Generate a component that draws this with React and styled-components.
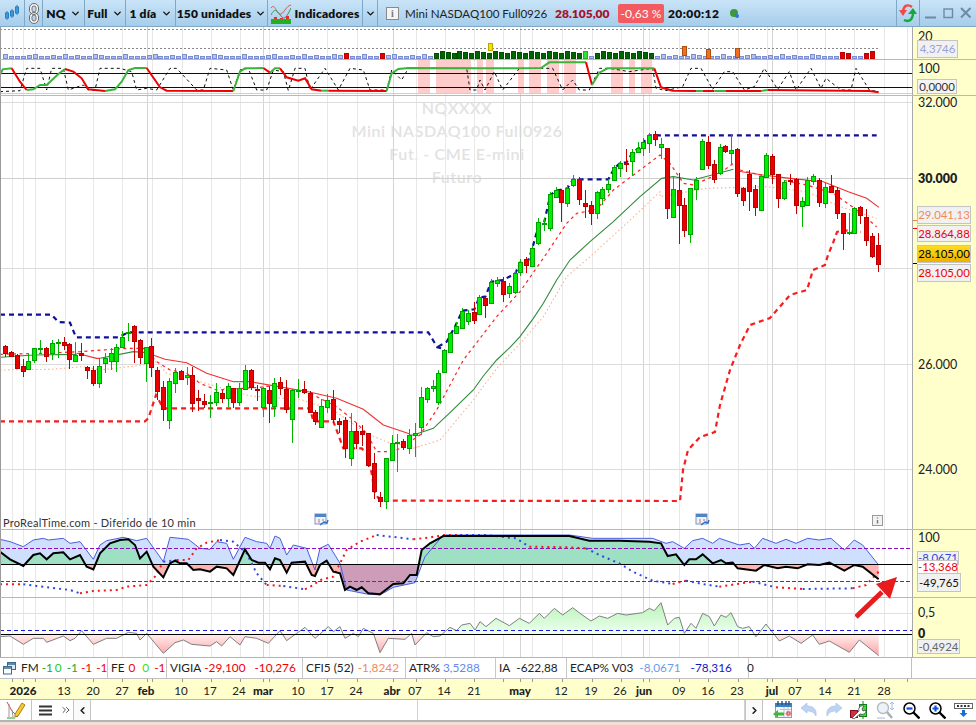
import React from 'react';
import styled, { createGlobalStyle } from 'styled-components';
import { ChevronDown, ChevronLeft, ChevronRight, ChevronsRight } from 'lucide-react';

const GlobalStyle = createGlobalStyle`
  html, body { margin: 0; padding: 0; background: #f4dfd8; }
  body { font-family: "Lato", "Liberation Sans", sans-serif; overflow: hidden; }
`;

const PLOT_W = 912;

// points were read off zoomed crops: z(ox, oy) turns crop coords into page coords
const z = (ox, oy) => (list) => list.map(([x, y]) => [ox + x / 3, oy + y / 3]);
const pts = (list) => list.map((p) => p.join(',')).join(' ');
const area = (list, base) => pts([[list[0][0], base], ...list, [list[list.length - 1][0], base]]);

const Page = styled.div`
  position: relative;
  width: 976px;
  height: 725px;
  display: flex;
  flex-direction: column;
  overflow: hidden;
  background: #f4dfd8;
`;

const Toolbar = styled.div`
  height: 27px;
  flex: none;
  display: flex;
  align-items: center;
  background: linear-gradient(#c9e4f8, #a6cdea);
  border-bottom: 1px solid #7fa8c6;
  box-sizing: border-box;
  font-size: 12px;
  color: #111;
`;
const ToolCell = styled.div`
  width: ${(p) => p.$w}px;
  height: 100%;
  flex: none;
  box-sizing: border-box;
  display: flex;
  align-items: center;
  justify-content: center;
  gap: ${(p) => p.$gap ?? 4}px;
  border-right: ${(p) => (p.$plain ? 'none' : '1px solid #7fa8c6')};
  font-weight: 800;
  letter-spacing: 0.2px;
`;
const Instrument = styled.div`
  flex: 1;
  display: flex;
  align-items: center;
  height: 100%;
  padding-left: 8px;
  border-right: 1px solid #7fa8c6;
`;
const InfoBox = styled.span`
  width: 11px;
  height: 11px;
  border: 1px solid #8a8a8a;
  background: #f4f4f4;
  color: #777;
  font: bold 10px/11px "Liberation Serif", serif;
  text-align: center;
  margin-right: 6px;
`;
const InstrumentName = styled.span`
  font-size: 11.6px;
  width: 150px;
  white-space: nowrap;
  color: #222;
`;
const Last = styled.span`
  font-weight: 800;
  font-size: 12px;
  color: #a8102a;
  width: 63px;
`;
const Change = styled.span`
  background: #f25b5f;
  color: #fff;
  font-size: 12px;
  line-height: 15px;
  border-radius: 2px;
  padding: 2px 0;
  width: 46px;
  white-space: nowrap;
  text-align: center;
  margin-right: 4px;
`;
const Clock = styled.span`
  font-weight: 800;
  font-size: 12px;
  letter-spacing: 0.4px;
  width: 62px;
`;
const StatusDot = styled.span`
  position: relative;
  width: 8px;
  height: 8px;
  border-radius: 50%;
  background: #3c9a3c;
  &::after {
    content: '';
    position: absolute;
    right: -1px;
    bottom: -1px;
    width: 4px;
    height: 4px;
    border-radius: 50%;
    background: #2878e0;
  }
`;

const Pane = styled.div`
  position: relative;
  height: ${(p) => p.$h}px;
  flex: none;
  display: flex;
  box-sizing: border-box;
  background: #fff;
  &::after {
    content: '';
    display: ${(p) => (p.$noTop ? 'none' : 'block')};
    position: absolute;
    left: 0;
    right: 0;
    top: 0;
    height: 1px;
    background: #b8b8b8;
    z-index: 1;
  }
`;
const Plot = styled.div`
  position: relative;
  width: ${PLOT_W}px;
  flex: none;
  overflow: hidden;
  border-left: 1px solid #9a9a9a;
  box-sizing: border-box;
  svg { display: block; position: relative; margin-left: -1px; }
`;
const Axis = styled.div`
  position: relative;
  flex: 1;
  background: #ffffcc;
  border-left: 1px solid #a8a8a8;
  font-size: 12.5px;
  color: #222;
`;
const AxisValue = styled.span`
  position: absolute;
  left: 5px;
  top: ${(p) => p.$y}px;
  line-height: 14px;
  font-weight: ${(p) => (p.$bold ? 800 : 400)};
  color: #222;
  white-space: nowrap;
`;
const Tag = styled.span`
  position: absolute;
  z-index: 3;
  left: 4px;
  top: ${(p) => p.$y}px;
  width: ${(p) => p.$w ?? 54}px;
  height: ${(p) => p.$h ?? 18}px;
  line-height: ${(p) => (p.$h ?? 18) - 2}px;
  box-sizing: border-box;
  text-align: center;
  font-size: 11.4px;
  white-space: nowrap;
  color: ${(p) => p.$c};
  background: ${(p) => p.$bg ?? '#f1f1f1'};
  border: 1px solid #c4c4c4;
`;
const Tick = styled.i`
  position: absolute;
  left: 0;
  top: ${(p) => p.$y}px;
  width: 4px;
  height: 1px;
  background: ${(p) => p.$c};
`;

const Watermark = styled.div`
  position: absolute;
  left: 0;
  width: ${PLOT_W}px;
  top: 1px;
  text-align: center;
  color: #e2e2e2;
  font-size: 16px;
  font-weight: 600;
  line-height: 23px;
  letter-spacing: 0.6px;
`;
const Delay = styled.div`
  position: absolute;
  left: 2px;
  bottom: -1px;
  font-size: 11px;
  line-height: 15px;
  color: #333;
  letter-spacing: 0.25px;
`;

const Legend = styled.div`
  height: 21px;
  flex: none;
  display: flex;
  background: #fff;
  border-top: 1px solid #b4b4b4;
  box-sizing: border-box;
`;
const LegendRow = styled.div`
  width: ${PLOT_W}px;
  display: flex;
  flex: none;
  border-right: 1px solid #c0c0c0;
  box-sizing: border-box;
  font-size: 11.8px;
  line-height: 20px;
  color: #222;
`;
const LegendCell = styled.div`
  width: ${(p) => p.$w}px;
  flex: none;
  display: flex;
  box-sizing: border-box;
  padding-left: ${(p) => p.$pad ?? 3}px;
  border-right: ${(p) => (p.$plain ? 'none' : '1px solid #c8c8c8')};
  white-space: nowrap;
  align-items: ${(p) => (p.$plain ? 'center' : 'stretch')};
`;
const LegendValue = styled.span`
  color: ${(p) => p.$c ?? '#222'};
  margin-left: ${(p) => p.$ml}px;
`;

const TimeAxis = styled.div`
  position: relative;
  height: 22px;
  flex: none;
  background: #ffffcc;
  border-top: 1px solid #c0c0c0;
  border-bottom: 1px solid #b8b8b8;
  box-sizing: border-box;
`;
const TimeLabel = styled.span`
  position: absolute;
  left: ${(p) => p.$x}px;
  top: 5px;
  transform: translateX(-50%);
  font-size: 11.6px;
  line-height: 14px;
  font-weight: ${(p) => (p.$bold ? 900 : 400)};
  color: #222;
`;
const TimeTick = styled.i`
  position: absolute;
  left: ${(p) => p.$x}px;
  top: 0;
  width: 1px;
  height: 3px;
  background: #999;
`;

const BottomBar = styled.div`
  height: 20px;
  flex: none;
  display: flex;
  align-items: stretch;
  background: #fff;
  border-bottom: 2px solid #b4b4b4;
  box-sizing: content-box;
`;
const BarButton = styled.div`
  width: ${(p) => p.$w}px;
  flex: none;
  display: flex;
  align-items: center;
  justify-content: center;
  box-sizing: border-box;
  border-right: ${(p) => (p.$line ? '1px solid #c4c4c4' : 'none')};
`;
const ScrollTrack = styled.div`
  width: 690px;
  flex: none;
  display: flex;
  border-left: 1px solid #c4c4c4;
  border-right: 1px solid #c4c4c4;
  box-sizing: border-box;
`;
const ScrollEnd = styled.div`
  width: 16px;
  flex: none;
  display: flex;
  align-items: center;
  justify-content: center;
  background: #fafafa;
  border-left: ${(p) => (p.$right ? '1px solid #c4c4c4' : 'none')};
  border-right: ${(p) => (p.$right ? 'none' : '1px solid #c4c4c4')};
`;
const ScrollFill = styled.div`
  flex: 1;
  border-right: 1px solid #d0d0d0;
`;
const IconRow = styled.div`
  flex: 1;
  display: flex;
  align-items: center;
  justify-content: space-between;
  padding: 0 3px 0 10px;
`;

// grid lines shared by every pane
const WEEK_X = [12, 23, 35, 65, 93, 122, 152, 182, 211, 240, 269, 298, 327, 357, 416, 445, 474, 503, 532, 562, 592, 621, 649, 679, 708, 738, 767, 797, 825, 854, 884, 907];
const MONTH_X = [147, 263, 393, 520, 643, 772];

function Grid({ y, h }) {
  return (
    <g shapeRendering="crispEdges">
      {WEEK_X.map((x) => (
        <line key={x} x1={x} x2={x} y1={y} y2={y + h} stroke="#e8e8e8" />
      ))}
      {MONTH_X.map((x) => (
        <line key={x} x1={x} x2={x} y1={y} y2={y + h} stroke="#d4d4d4" />
      ))}
    </g>
  );
}

function PaneSvg({ y, h, children }) {
  return (
    <svg width={PLOT_W} height={h} viewBox={`0 ${y} ${PLOT_W} ${h}`}>
      <Grid y={y} h={h} />
      {children}
    </svg>
  );
}

// volume pane
const RED_VOL = [163, 345, 367, 373, 380, 843, 849, 866, 872, 878];
const ORANGE_VOL = { 684: 46, 708: 49, 737: 48 };
const volBars = Array.from({ length: 146 }, (_, i) => {
  const x = Math.round(5 + 5.98 * i);
  const near = (list) => list.some((v) => Math.abs(v - x) <= 2);
  let kind = 'blue';
  if (near(RED_VOL)) kind = 'red';
  else if (x >= 436 && x <= 656 && !near([591])) kind = near([585]) ? 'lime' : 'green';
  return { x, kind, blue: 2 + ((i * 7) % 5 === 0 ? 2 : (i * 3) % 4 === 0 ? 1 : 0), tall: 5 + ((i * 5) % 3) };
});
const VOL_COLOR = {
  red: ['#e00000', '#c00000'],
  green: ['#006400', '#005000'],
  lime: ['#30e030', '#20b020'],
};

function VolumePane() {
  return (
    <PaneSvg y={27} h={32}>
      <g stroke="#888" strokeDasharray="2 2" shapeRendering="crispEdges">
        <line x1="0" x2="878" y1="29" y2="29" />
        <line x1="0" x2="878" y1="48" y2="48" />
      </g>
      <g shapeRendering="crispEdges">
        {volBars.map((b) => {
          if (b.kind === 'blue') {
            return <rect key={b.x} x={b.x - 2 + 0.5} y={58 - b.blue + 0.5} width="4" height={b.blue} fill="#b4c2ee" stroke="#7c8ecf" />;
          }
          const [fill, stroke] = VOL_COLOR[b.kind];
          return <rect key={b.x} x={b.x - 2 + 0.5} y={58 - b.tall + 0.5} width="4" height={b.tall} fill={fill} stroke={stroke} />;
        })}
        <rect x="488.5" y="43.5" width="4" height="7" fill="#f2e200" stroke="#b8a800" />
        {Object.entries(ORANGE_VOL).map(([x, top]) => (
          <rect key={x} x={+x - 2 + 0.5} y={top + 0.5} width="4" height={9} fill="#f07020" stroke="#b05010" />
        ))}
      </g>
    </PaneSvg>
  );
}

// oscillator pane
const PINK_BANDS = [[418, 430], [436, 471], [477, 483], [486, 494], [518, 524], [529, 541], [547, 559], [564, 576], [611, 623], [629, 635], [641, 652]];
const ose1 = z(0, 0);
const ose2 = z(486, 0);
const OSC_SEGMENTS = [
  ['g', ose1([[0, 225], [8, 208], [35, 205]])],
  ['r', ose1([[35, 205], [60, 245], [80, 270]])],
  ['g', ose1([[80, 270], [100, 268], [120, 255], [140, 255], [175, 222], [195, 207]])],
  ['r', ose1([[195, 207], [220, 215], [245, 235], [265, 268], [315, 273]])],
  ['g', ose1([[315, 273], [345, 268], [365, 245], [385, 210], [405, 204], [440, 204]])],
  ['r', ose1([[440, 204], [480, 262], [500, 272], [700, 273]])],
  ['g', ose1([[700, 273], [720, 215], [735, 205], [790, 204]])],
  ['r', ose1([[790, 204], [810, 218]])],
  ['g', ose1([[810, 218], [825, 205], [840, 205]])],
  ['r', ose1([[840, 205], [860, 232], [895, 242], [915, 235], [935, 268], [965, 272]])],
  ['g', ose1([[965, 272], [985, 272]])],
  ['r', ose1([[985, 272], [1160, 273]])],
  ['g', [...ose1([[1160, 273], [1175, 220], [1195, 207], [1225, 204]]), ...ose2([[0, 205], [165, 204], [190, 187], [300, 187]])]],
  ['r', ose2([[300, 187], [318, 255]])],
  ['g', ose2([[318, 255], [340, 218], [365, 205], [505, 205]])],
  ['r', ose2([[505, 205], [525, 262], [560, 272], [630, 273]])],
  ['g', ose2([[630, 273], [650, 273]])],
  ['r', ose2([[650, 273], [685, 273]])],
  ['g', ose2([[685, 273], [720, 273]])],
  ['r', ose2([[720, 273], [825, 273]])],
  ['g', ose2([[825, 273], [845, 270]])],
  ['r', ose2([[845, 270], [1150, 273], [1178, 277]])],
];
const OSC_BLACK = [
  ...ose1([[0, 275], [60, 272], [80, 205], [120, 205], [140, 270], [155, 205], [190, 205], [205, 270], [250, 255], [265, 270], [285, 270], [300, 205], [360, 205], [395, 215], [410, 270], [440, 265], [470, 270], [510, 205], [530, 205], [590, 270], [610, 270], [630, 205], [680, 210], [700, 270], [720, 210], [745, 205], [770, 270], [800, 270], [820, 210], [850, 215], [865, 272], [885, 205], [915, 205], [930, 270], [975, 205], [1015, 270], [1050, 205], [1090, 210], [1110, 270], [1160, 270], [1175, 210], [1205, 240], [1225, 205], [1400, 205], [1410, 270], [1430, 270], [1440, 240], [1455, 270]]),
  ...ose2([[25, 215], [50, 270], [100, 205], [120, 205], [200, 205], [230, 270], [260, 240], [280, 270], [310, 270], [340, 205], [370, 205], [430, 215], [500, 205], [510, 265], [540, 272], [590, 260], [615, 205], [645, 205], [680, 268], [715, 215], [740, 215], [775, 270], [805, 260], [835, 205], [875, 268], [910, 215], [930, 270], [975, 205], [1005, 265], [1020, 235], [1065, 270], [1095, 270], [1110, 205], [1150, 270], [1178, 275]]),
];

function OscillatorPane() {
  return (
    <PaneSvg y={59} h={36}>
      {PINK_BANDS.map(([a, b]) => (
        <rect key={a} x={a} y="60" width={b - a} height="33" fill="#ffcccc" />
      ))}
      <line x1="0" x2={PLOT_W} y1="93.5" y2="93.5" stroke="#cfcfcf" />
      <line x1="0" x2={PLOT_W} y1="73.5" y2="73.5" stroke="#00007a" />
      <line x1="0" x2={PLOT_W} y1="87.5" y2="87.5" stroke="#00007a" />
      <polyline points={pts(OSC_BLACK)} fill="none" stroke="#111" strokeWidth="1" strokeDasharray="3 3" />
      {OSC_SEGMENTS.map(([c, list], i) => (
        <polyline key={i} points={pts(list)} fill="none" stroke={c === 'g' ? '#3cb43c' : '#f00000'} strokeWidth="2" />
      ))}
    </PaneSvg>
  );
}

// candles: [green?, x, wick top, wick bottom, body top, body bottom] in crop coords
const CANDLES_A = [
  [0, 16, 105, 142, 108, 128], [0, 34, 122, 142, 127, 139], [0, 52, 132, 176, 136, 174], [0, 70, 148, 200, 168, 182], [1, 85, 133, 178, 154, 176], [1, 103, 115, 160, 115, 150], [1, 121, 90, 130, 115, 117], [0, 139, 112, 155, 114, 138], [1, 157, 90, 150, 100, 130], [1, 175, 88, 145, 95, 97], [0, 193, 82, 120, 97, 104], [0, 208, 100, 178, 103, 146], [1, 226, 96, 155, 136, 152], [0, 244, 100, 152, 128, 136], [0, 262, 168, 207, 170, 181], [0, 280, 168, 228, 181, 220], [1, 298, 145, 235, 169, 218], [1, 316, 128, 188, 143, 160], [1, 332, 115, 180, 130, 152], [1, 349, 102, 185, 112, 152], [1, 367, 62, 110, 80, 110], [1, 385, 40, 92, 66, 68], [0, 403, 46, 160, 48, 92], [0, 421, 88, 162, 91, 140], [1, 439, 110, 215, 112, 160], [0, 454, 85, 200, 108, 172], [0, 472, 170, 270, 180, 242], [0, 490, 212, 332, 232, 296], [1, 508, 205, 358, 214, 331], [1, 526, 175, 248, 187, 218], [0, 544, 180, 210, 184, 208], [1, 562, 170, 225, 196, 202], [0, 577, 170, 305, 195, 278], [0, 595, 240, 303, 265, 271], [0, 613, 253, 295, 274, 281], [1, 631, 255, 325, 277, 280], [1, 649, 220, 288, 247, 275], [0, 667, 240, 280, 250, 263], [1, 685, 220, 290, 229, 265], [0, 700, 233, 293, 234, 277], [1, 718, 220, 288, 235, 275], [1, 736, 165, 240, 180, 238], [0, 754, 178, 240, 180, 230], [0, 772, 225, 272, 237, 241], [1, 790, 232, 322, 235, 290], [0, 808, 228, 340, 240, 278], [1, 823, 205, 320, 220, 287], [0, 841, 202, 255, 216, 233], [0, 859, 210, 308, 238, 298], [1, 877, 238, 398, 240, 328], [1, 895, 208, 265, 239, 241], [0, 913, 212, 252, 238, 245], [0, 931, 242, 310, 249, 307], [0, 946, 300, 345, 307, 333], [1, 964, 268, 353, 289, 352], [1, 982, 252, 310, 271, 292], [0, 1000, 240, 338, 268, 328], [0, 1018, 325, 368, 332, 341], [0, 1036, 320, 443, 331, 415], [1, 1054, 310, 467, 364, 445], [0, 1069, 340, 418, 364, 398], [0, 1087, 345, 408, 364, 371], [0, 1105, 368, 470, 370, 465], [0, 1123, 430, 568, 460, 542], [0, 1141, 545, 592, 562, 572], [1, 1159, 443, 598, 445, 574], [1, 1177, 376, 452, 400, 450], [1, 1192, 372, 485, 395, 400],
];
const CANDLES_B = [
  [0, 10, 958, 990, 963, 982], [1, 28, 928, 1003, 945, 985], [1, 46, 910, 1010, 940, 945], [1, 64, 800, 945, 832, 920], [1, 82, 800, 850, 805, 838], [1, 100, 780, 815, 798, 805], [1, 115, 750, 855, 760, 845], [1, 133, 688, 758, 691, 755], [1, 151, 635, 698, 638, 695], [1, 169, 605, 642, 618, 640], [1, 187, 563, 628, 572, 623], [1, 205, 570, 615, 580, 602], [0, 223, 545, 612, 576, 600], [1, 238, 525, 585, 532, 583], [0, 256, 530, 593, 535, 554], [1, 274, 478, 548, 485, 548], [1, 292, 470, 502, 481, 488], [0, 310, 472, 546, 484, 521], [1, 328, 490, 533, 498, 518], [1, 346, 452, 522, 460, 515], [1, 361, 418, 468, 427, 455], [0, 379, 410, 460, 418, 436], [1, 397, 375, 442, 385, 437], [1, 415, 295, 375, 307, 370], [1, 433, 295, 332, 309, 313], [1, 451, 215, 332, 222, 325], [1, 469, 202, 235, 211, 230], [0, 484, 208, 305, 210, 245], [1, 502, 195, 262, 205, 250], [1, 520, 165, 200, 178, 196], [0, 538, 172, 256, 178, 238], [0, 556, 210, 294, 250, 257], [0, 574, 242, 314, 255, 278], [1, 592, 212, 296, 216, 278], [1, 607, 200, 255, 208, 235], [1, 625, 178, 220, 192, 208], [1, 643, 135, 182, 141, 180], [1, 661, 122, 170, 128, 143], [0, 679, 87, 155, 128, 131], [1, 697, 88, 168, 97, 122], [1, 715, 65, 100, 85, 95], [1, 730, 55, 108, 65, 83], [1, 748, 40, 98, 46, 68], [0, 766, 34, 78, 42, 56], [1, 784, 55, 118, 73, 80], [0, 802, 84, 298, 84, 265], [1, 820, 170, 292, 208, 290], [0, 838, 158, 373, 210, 254], [0, 853, 235, 350, 255, 329], [1, 871, 205, 368, 205, 341], [1, 889, 170, 240, 180, 208],
];
const CANDLES_C = [
  [1, 187, 58, 150, 63, 148], [0, 205, 48, 148, 66, 134], [0, 223, 120, 190, 132, 176], [1, 241, 72, 165, 82, 160], [0, 256, 75, 100, 78, 92], [1, 274, 45, 135, 90, 100], [0, 292, 85, 232, 87, 218], [0, 310, 200, 258, 204, 240], [0, 328, 150, 272, 162, 212], [0, 346, 195, 287, 208, 260], [1, 364, 165, 272, 168, 270], [1, 379, 98, 172, 105, 172], [0, 397, 102, 192, 108, 163], [0, 415, 162, 265, 162, 234], [1, 433, 180, 240, 186, 233], [0, 451, 162, 195, 181, 184], [0, 469, 175, 282, 177, 254], [1, 487, 232, 320, 244, 257], [1, 502, 170, 255, 181, 254], [1, 520, 163, 195, 169, 182], [0, 538, 175, 262, 181, 246], [1, 556, 190, 265, 202, 248], [0, 574, 165, 218, 198, 215], [0, 592, 200, 296, 210, 278], [0, 610, 278, 390, 280, 338], [1, 628, 280, 345, 336, 340], [1, 643, 262, 342, 264, 338], [0, 661, 258, 312, 262, 285], [0, 679, 268, 378, 292, 360], [0, 697, 340, 415, 349, 407], [0, 715, 340, 455, 376, 431],
];
const toCandles = (list, ox, oy) =>
  list.map(([up, x, wt, wb, bt, bb]) => ({
    up,
    x: Math.round(ox + x / 3),
    wt: Math.round(oy + wt / 3),
    wb: Math.round(oy + wb / 3),
    bt: Math.round(oy + bt / 3),
    bb: Math.round(oy + bb / 3),
  }));
const CANDLES = [...toCandles(CANDLES_A, 0, 310), ...toCandles(CANDLES_B, 400, 120), ...toCandles(CANDLES_C, 640, 120)];

const a8 = z(0, 310);
const a9 = z(400, 120);
const a5 = z(640, 120);
const BLUE_STOP = [
  ...a8([[0, 14], [155, 14], [175, 36], [210, 38], [228, 82], [355, 82], [385, 67], [1285, 67], [1312, 112], [1325, 115]]),
  ...a9([[115, 680], [140, 665], [165, 620], [187, 572], [223, 568], [238, 532], [256, 530], [274, 485], [310, 480], [346, 460], [361, 427], [385, 420], [397, 385], [415, 320], [433, 305], [451, 225], [469, 212], [502, 205], [520, 178], [625, 178], [643, 145], [661, 128], [679, 128], [697, 100], [715, 85], [730, 68], [748, 46]]),
  ...a5([[710, 46]]),
];
const RED_STOP_A = [
  ...a8([[0, 334], [435, 334], [445, 325], [468, 255], [490, 295], [930, 295], [940, 334], [1000, 334], [1030, 415], [1085, 415], [1100, 430], [1115, 490], [1125, 550], [1141, 572], [1160, 572]]),
  [680, 501], [683, 470], [688, 450], [700, 437], [715, 432], [720, 405], [730, 370], [740, 345], [750, 325], [770, 318], [790, 295], [807, 290], [813, 270], [825, 265], [828, 255], [833, 243], [837, 232], [842, 230], [861, 232],
];
const MA_SEGMENTS = [
  ['g', a8([[0, 142], [100, 135], [230, 133]])],
  ['r', a8([[230, 130], [290, 145], [300, 145]])],
  ['g', a8([[300, 145], [400, 125], [440, 128]])],
  ['r', a8([[440, 128], [495, 148], [560, 158], [620, 190], [700, 215]])],
  ['g', a8([[700, 215], [750, 215]])],
  ['r', a8([[750, 215], [925, 245], [1010, 265], [1090, 298], [1150, 345], [1230, 372]])],
  ['g', [...a8([[1230, 375]]), ...a9([[40, 945], [100, 925], [150, 878], [220, 810], [250, 768], [290, 720], [330, 682], [360, 650], [400, 595], [430, 550], [470, 480], [510, 420], [570, 365], [640, 305], [720, 230], [785, 175]]), ...a5([[100, 170], [160, 180], [280, 148]])]],
  ['r', a5([[290, 153], [370, 165], [450, 175], [550, 185], [625, 215], [680, 235], [717, 262]])],
];
const MA_FAST = [
  ...a8([[0, 133], [130, 130], [240, 125], [380, 115], [430, 115], [470, 155], [510, 180], [560, 190], [600, 220], [650, 240], [780, 232], [830, 225], [880, 240], [930, 250], [1010, 290], [1060, 330], [1100, 370], [1130, 425], [1180, 425]]),
  ...a9([[0, 985], [60, 945], [110, 870], [190, 720], [290, 590], [360, 515], [440, 400], [500, 310], [530, 280], [590, 268], [640, 210], [720, 150], [780, 105], [810, 130], [850, 190]]),
  ...a5([[160, 195], [240, 160], [280, 130], [300, 150], [400, 175], [500, 195], [580, 220], [650, 270], [710, 320]]),
];
const MA_SLOW = [
  ...a8([[0, 180], [150, 178], [250, 170], [300, 180], [430, 165], [470, 155], [500, 190], [600, 215], [750, 258], [900, 268], [1000, 300], [1100, 370], [1170, 400], [1260, 410]]),
  ...a9([[40, 985], [120, 960], [220, 840], [290, 745], [370, 660], [430, 590], [500, 470], [570, 410], [680, 310], [780, 215]]),
  ...a5([[60, 230], [200, 205], [380, 200], [500, 215], [600, 260], [710, 295]]),
];

function MiniCalendar({ x, y }) {
  return (
    <g transform={`translate(${x} ${y})`}>
      <rect x="1" y="1" width="11" height="10" fill="#eef2fa" stroke="#7d96c0" />
      <rect x="1" y="1" width="11" height="3" fill="#4f84c4" />
      <path d="M4 7h2M8 7h2M4 9h2" stroke="#c87070" />
      <path d="M6 12l4-3 3 1 1-3" fill="none" stroke="#2a70c8" strokeWidth="1.4" />
    </g>
  );
}

function MainPane() {
  return (
    <PaneSvg y={95} h={434}>
      <g stroke="#dcdcdc" shapeRendering="crispEdges">
        <line x1="0" x2={PLOT_W} y1="102.5" y2="102.5" />
        <line x1="0" x2={PLOT_W} y1="178.5" y2="178.5" stroke="#cfcfcf" />
        <line x1="0" x2={PLOT_W} y1="268.5" y2="268.5" />
        <line x1="0" x2={PLOT_W} y1="364.5" y2="364.5" />
        <line x1="0" x2={PLOT_W} y1="469.5" y2="469.5" />
      </g>
      <polyline points={pts(MA_SLOW)} fill="none" stroke="#ffae90" strokeWidth="1.1" strokeDasharray="1.5 2.5" />
      <polyline points={pts(MA_FAST)} fill="none" stroke="#ff2020" strokeWidth="1.2" strokeDasharray="3 3.5" />
      {MA_SEGMENTS.map(([c, list], i) => (
        <polyline key={i} points={pts(list)} fill="none" stroke={c === 'g' ? '#2f8a3a' : '#f23030'} strokeWidth="1.1" />
      ))}
      <polyline points={pts(BLUE_STOP)} fill="none" stroke="#10109a" strokeWidth="2.2" strokeDasharray="5 4" />
      <polyline points={pts(RED_STOP_A)} fill="none" stroke="#fa1c1c" strokeWidth="2.2" strokeDasharray="5 4" />
      <g shapeRendering="crispEdges">
        {CANDLES.map((c) => (
          <g key={c.x}>
            <line x1={c.x + 0.5} x2={c.x + 0.5} y1={c.wt} y2={c.wb} stroke={c.up ? '#00b400' : '#c40000'} />
            <rect x={c.x - 1.5} y={c.bt + 0.5} width="4" height={Math.max(c.bb - c.bt, 1)} fill={c.up ? '#00ee00' : '#ea0000'} stroke={c.up ? '#00a000' : '#b80000'} />
          </g>
        ))}
      </g>
      <MiniCalendar x={314} y={513} />
      <MiniCalendar x={695} y={513} />
      <rect x="872.5" y="515.5" width="10" height="10" fill="#f2f2f2" stroke="#999" />
      <path d="M877.5 517.5v1M877.5 520v3.5" stroke="#777" strokeWidth="1.4" />
    </PaneSvg>
  );
}

// fast oscillator with the two fills
const b6 = z(0, 510);
const b7 = z(486, 510);
const OSC_BLUE = [
  ...b6([[0, 88], [30, 95], [70, 110], [100, 90], [130, 85], [145, 90], [190, 85], [210, 100], [240, 95], [280, 148], [300, 105], [320, 92], [370, 82], [410, 92], [440, 85], [490, 155], [510, 82], [540, 85], [565, 88], [600, 115], [630, 118], [650, 95], [680, 100], [700, 148], [735, 82], [770, 95], [800, 100], [810, 115], [825, 78], [840, 85], [860, 135], [880, 105], [920, 115], [945, 180], [960, 115], [985, 103], [1020, 160], [1040, 240], [1100, 252], [1140, 255], [1180, 232], [1245, 218], [1275, 140], [1330, 75], [1458, 75]]),
  ...b7([[250, 75], [320, 85], [500, 85], [540, 100], [560, 95], [595, 115], [620, 92], [650, 85], [680, 100], [700, 85], [760, 105], [790, 100], [805, 115], [830, 85], [870, 100], [900, 88], [930, 100], [965, 85], [1000, 90], [1035, 85], [1075, 120], [1105, 90], [1130, 105], [1178, 165]]),
];
const OSC_THICK = [
  ...b6([[0, 125], [30, 148], [70, 168], [100, 135], [120, 130], [140, 148], [160, 130], [190, 127], [210, 148], [240, 135], [260, 170], [280, 178], [300, 130], [330, 100], [360, 90], [385, 88], [405, 105], [420, 145], [440, 125], [460, 170], [490, 202], [510, 160], [525, 152], [540, 160], [560, 160], [580, 180], [600, 178], [630, 185], [650, 170], [680, 175], [700, 195], [735, 118], [755, 150], [775, 158], [795, 158], [810, 178], [825, 145], [840, 150], [860, 188], [875, 158], [915, 155], [935, 195], [945, 198], [960, 165], [980, 152], [1000, 185], [1020, 190], [1035, 240], [1050, 230], [1070, 240], [1085, 232], [1105, 250], [1140, 253], [1180, 222], [1210, 220], [1230, 195], [1250, 195], [1265, 120], [1290, 100], [1330, 78], [1458, 78]]),
  ...b7([[250, 78], [310, 92], [400, 92], [490, 95], [525, 100], [545, 138], [570, 133], [595, 165], [610, 148], [630, 148], [650, 133], [680, 160], [705, 150], [720, 160], [740, 158], [755, 175], [810, 182], [835, 165], [875, 175], [900, 170], [935, 175], [965, 163], [1000, 165], [1030, 158], [1075, 182], [1105, 165], [1130, 170], [1178, 208]]),
];
const DOTS = [
  ['#f01818', b6([[0, 223], [70, 223]])],
  ['#3048e0', b6([[70, 223], [110, 228], [170, 235], [210, 240], [240, 250]])],
  ['#f01818', b6([[240, 250], [280, 243], [350, 240], [380, 230], [440, 225], [465, 200], [490, 155]])],
  ['#3048e0', b6([[490, 155], [530, 150]])],
  ['#f01818', b6([[530, 150], [565, 150], [590, 115], [620, 98], [660, 90]])],
  ['#3048e0', b6([[660, 90], [700, 95], [740, 130], [770, 190], [800, 225]])],
  ['#f01818', b6([[800, 225], [850, 228]])],
  ['#3048e0', b6([[850, 228], [915, 238]])],
  ['#f01818', b6([[915, 238], [940, 225], [960, 210], [1000, 200], [1040, 120], [1080, 95], [1130, 75]])],
  ['#3048e0', b6([[1130, 75], [1240, 88]])],
  ['#f01818', b6([[1240, 88], [1290, 82], [1335, 75], [1380, 75]])],
  ['#3048e0', [...b6([[1380, 75], [1458, 75]]), ...b7([[90, 85], [130, 110]])]],
  ['#f01818', b7([[130, 110], [250, 112], [300, 115]])],
  ['#3048e0', b7([[300, 115], [340, 135], [400, 160], [440, 185], [500, 212], [560, 222]])],
  ['#f01818', b7([[560, 222], [600, 212]])],
  ['#3048e0', b7([[600, 212], [650, 222], [700, 230]])],
  ['#f01818', b7([[700, 230], [800, 215]])],
  ['#3048e0', b7([[800, 215], [870, 232]])],
  ['#f01818', b7([[870, 232], [950, 237]])],
  ['#3048e0', b7([[950, 237], [1100, 235]])],
  ['#f01818', b7([[1100, 235], [1140, 225], [1178, 185]])],
];

function MomentumPane() {
  const zero = 564;
  return (
    <PaneSvg y={529} h={68}>
      <defs>
        <clipPath id="above"><rect x="0" y="529" width={PLOT_W} height={zero - 529} /></clipPath>
        <clipPath id="below"><rect x="0" y={zero} width={PLOT_W} height={40} /></clipPath>
        <clipPath id="trough"><rect x="340" y={zero} width="78" height={40} /></clipPath>
      </defs>
      <polygon points={area(OSC_BLUE, zero)} fill="#cfe0fe" />
      <polygon points={area(OSC_THICK, zero)} fill="#9ee0c4" clipPath="url(#above)" />
      <polygon points={area(OSC_THICK, zero)} fill="#ffb4b4" clipPath="url(#below)" />
      <polygon points={area(OSC_BLUE, zero)} fill="#c0c0ec" clipPath="url(#trough)" />
      <polygon points={area(OSC_THICK, zero)} fill="#cc9cb8" clipPath="url(#trough)" />
      <polyline points={pts(OSC_BLUE)} fill="none" stroke="#4a5ee0" strokeWidth="1" />
      <g shapeRendering="crispEdges">
        <line x1="0" x2={PLOT_W} y1="548.5" y2="548.5" stroke="#8a10c0" strokeDasharray="4 2" />
        <line x1="0" x2={PLOT_W} y1="581.5" y2="581.5" stroke="#8a10c0" strokeDasharray="4 2" />
        <line x1="0" x2={PLOT_W} y1="564.5" y2="564.5" stroke="#000" />
      </g>
      {DOTS.map(([c, list], i) => (
        <polyline key={i} points={pts(list)} fill="none" stroke={c} strokeWidth="2" strokeDasharray="2 4" />
      ))}
      <polyline points={pts(OSC_THICK)} fill="none" stroke="#000" strokeWidth="2" />
    </PaneSvg>
  );
}

const FLOW = [
  ...b6([[0, 380], [30, 378], [70, 403], [100, 385], [130, 385], [140, 397], [190, 378], [210, 392], [225, 385], [245, 362], [280, 403], [320, 385], [350, 385], [385, 367], [410, 370], [420, 390], [440, 370], [465, 400], [490, 430], [525, 398], [550, 390], [575, 403], [630, 408], [650, 395], [665, 408], [690, 380], [720, 405], [735, 380], [770, 385], [805, 400], [840, 362], [860, 392], [890, 370], [915, 352], [945, 385], [985, 350], [1000, 365], [1020, 350], [1035, 385], [1060, 370], [1075, 380], [1090, 355], [1120, 370], [1140, 428], [1165, 385], [1215, 388], [1235, 370], [1245, 405], [1280, 368], [1300, 380], [1320, 378], [1350, 352], [1370, 362], [1385, 345], [1410, 340], [1425, 360], [1440, 335]]),
  ...b7([[0, 350], [30, 325], [70, 347], [100, 325], [130, 340], [160, 310], [175, 325], [205, 295], [230, 315], [260, 293], [285, 312], [315, 333], [340, 318], [365, 325], [395, 310], [420, 315], [470, 308], [490, 295], [505, 302], [525, 278], [545, 345], [565, 325], [580, 322], [595, 370], [615, 340], [630, 355], [650, 310], [670, 320], [685, 348], [705, 315], [720, 322], [735, 308], [755, 350], [770, 355], [790, 350], [810, 380], [840, 342], [880, 393], [910, 378], [945, 400], [980, 375], [1000, 403], [1030, 393], [1090, 427], [1120, 390], [1178, 437]]),
];

function FlowPane() {
  const zero = 634;
  return (
    <PaneSvg y={597} h={60}>
      <defs>
        <linearGradient id="up" gradientUnits="userSpaceOnUse" x1="0" x2="0" y1="603" y2="634">
          <stop offset="0" stopColor="#b8f4b8" />
          <stop offset="1" stopColor="#f0fff0" />
        </linearGradient>
        <linearGradient id="down" gradientUnits="userSpaceOnUse" x1="0" x2="0" y1="634" y2="657">
          <stop offset="0" stopColor="#fff0f0" />
          <stop offset="1" stopColor="#ff9c9c" />
        </linearGradient>
        <clipPath id="flowAbove"><rect x="0" y="597" width={PLOT_W} height={zero - 597} /></clipPath>
        <clipPath id="flowBelow"><rect x="0" y={zero} width={PLOT_W} height={25} /></clipPath>
      </defs>
      <line x1="0" x2={PLOT_W} y1="613.5" y2="613.5" stroke="#e0e0e0" />
      <polygon points={area(FLOW, zero)} fill="url(#up)" clipPath="url(#flowAbove)" />
      <polygon points={area(FLOW, zero)} fill="url(#down)" clipPath="url(#flowBelow)" />
      <polyline points={pts(FLOW)} fill="none" stroke="#808080" strokeWidth="1" />
      <g shapeRendering="crispEdges">
        <line x1="0" x2={PLOT_W} y1="630.5" y2="630.5" stroke="#1a1ae0" strokeDasharray="4 3" />
        <line x1="0" x2={PLOT_W} y1="634.5" y2="634.5" stroke="#000" />
      </g>
    </PaneSvg>
  );
}

// icons
const CandleIcon = () => (
  <svg width="16" height="18" viewBox="0 0 16 18">
    <g stroke="#2a7cc0" fill="#3f9ad8">
      <path d="M3 7v9M8 5v9M13 1v10" fill="none" />
      <rect x="1.5" y="9" width="3" height="5" />
      <rect x="6.5" y="7" width="3" height="5" />
      <rect x="11.5" y="3" width="3" height="6" />
    </g>
  </svg>
);
const ChainIcon = () => (
  <svg width="12" height="21" viewBox="0 0 12 21" fill="none" stroke="#6c6c6c">
    <rect x="3" y="2" width="6" height="8" rx="3" strokeWidth="3" stroke="#f4f4f4" />
    <rect x="3" y="11" width="6" height="8" rx="3" strokeWidth="3" stroke="#f4f4f4" />
    <rect x="1.5" y="0.5" width="9" height="11" rx="4.5" />
    <rect x="1.5" y="9.5" width="9" height="11" rx="4.5" />
    <rect x="4" y="3" width="4" height="6" rx="2" />
    <rect x="4" y="12" width="4" height="6" rx="2" />
  </svg>
);
const IndicatorIcon = () => (
  <svg width="20" height="23" viewBox="0 0 20 23" fill="none">
    <path d="M0 6c4-6 6 8 10 6s5-8 10-9" stroke="#e05050" />
    <path d="M0 13c4-8 6-4 10 1s6 0 10-8" stroke="#2f9a4a" />
    <path d="M0 17h20v5H0z" fill="#20b020" />
    <path d="M3 17V15h3v2M9 17v-1h3v1M15 17v-3h3v3" fill="#e03030" />
  </svg>
);
const SyncIcon = () => (
  <svg width="20" height="20" viewBox="0 0 20 20" fill="none">
    <path d="M14 4C10 1 6 2 5 8" stroke="#f24848" strokeWidth="2.4" />
    <path d="M1 7h8l-4 6z" fill="#f24848" />
    <path d="M6 17c4 2 8 1 9-6" stroke="#16a83a" strokeWidth="2.4" />
    <path d="M10 11h9l-4-6z" fill="#16a83a" />
  </svg>
);
const WinMin = () => (
  <svg width="12" height="12" viewBox="0 0 12 12"><path d="M0 10.5h11" stroke="#6f8aa0" strokeWidth="2" /></svg>
);
const WinMax = () => (
  <svg width="11" height="12" viewBox="0 0 11 12"><rect x="1" y="2" width="8.5" height="8.5" fill="none" stroke="#6f8aa0" strokeWidth="1.4" /></svg>
);
const WinClose = () => (
  <svg width="12" height="12" viewBox="0 0 12 12"><path d="M1 1l9.5 9.5M10.5 1L1 10.5" stroke="#6f8aa0" strokeWidth="2" /></svg>
);
const WindowsIcon = () => (
  <svg width="13" height="13" viewBox="0 0 13 13" fill="#dce8f4" stroke="#3a6a90">
    <rect x="4.5" y="0.5" width="8" height="7" />
    <rect x="0.5" y="4.5" width="8" height="7.5" fill="#fff" />
    <path d="M0.5 6h8M4.5 2h8" stroke="#3a6a90" strokeWidth="1.5" />
  </svg>
);
const PenIcon = () => (
  <svg width="20" height="18" viewBox="0 0 20 18" fill="none">
    <path d="M1 1l5 9 6 6" stroke="#d84040" />
    <path d="M3 3v13M6 9l1 7" stroke="#999" />
    <path d="M1 17h8" stroke="#20a020" />
    <path d="M9 13L16 2l3 2-7 11-3 1z" fill="#f8c830" stroke="#a88020" />
  </svg>
);
const MenuIcon = () => (
  <svg width="13" height="11" viewBox="0 0 13 11"><path d="M0 1.5h13M0 5.5h13M0 9.5h13" stroke="#333" strokeWidth="2" /></svg>
);
const CalendarBack = () => (
  <svg width="20" height="18" viewBox="0 0 20 18">
    <rect x="2.5" y="2.5" width="16" height="14" fill="#f4f6fa" stroke="#9a9a9a" />
    <rect x="2" y="2" width="17" height="4" fill="#3c80c0" />
    <path d="M5 0v4M9 0v4M13 0v4M16 0v4" stroke="#205080" strokeWidth="1.4" />
    <path d="M7 8.5h11M7 12.5h11M11 6v10M15 6v10" stroke="#c0c4cc" />
    <rect x="14" y="11" width="3" height="3" fill="none" stroke="#e03030" />
    <path d="M0 13l5-4v2.5h6v3H5V17z" fill="#3cb83c" />
  </svg>
);
const UndoIcon = ({ flip }) => (
  <svg width="16" height="15" viewBox="0 0 16 15" style={flip ? { transform: 'scaleX(-1)' } : undefined}>
    <path d="M0 5l6-5v3c6 0 10 3 9 10-2-4-5-5-9-5v2z" fill="#bcd4f2" stroke="#a0bce0" strokeWidth="0.6" />
  </svg>
);
const WrenchIcon = () => (
  <svg width="17" height="18" viewBox="0 0 17 18">
    <path d="M13 0v18" stroke="#108010" />
    <rect x="9.5" y="3.5" width="7" height="12" fill="#40d840" stroke="#108010" />
    <rect x="0.5" y="9.5" width="7" height="7" fill="#d03040" stroke="#801020" />
    <path d="M2 17l7-7c-1-3 1-6 5-5l-2 3 1 2 3-1c0 4-3 5-6 4l-6 5z" fill="#fff" stroke="#444" strokeWidth="0.8" />
  </svg>
);
const GreySearch = () => (
  <svg width="19" height="18" viewBox="0 0 19 18" fill="none">
    <circle cx="7" cy="7" r="5.5" fill="#eef2f6" stroke="#b4bcc4" strokeWidth="1.4" />
    <path d="M11 11l5 6" stroke="#aab0b8" strokeWidth="2.5" />
    <path d="M16 1v8M14 3l2-2 2 2M14 7l2 2 2-2M1 17h8" stroke="#a8b8e8" />
  </svg>
);
const ZoomIcon = ({ plus }) => (
  <svg width="17" height="17" viewBox="0 0 17 17" fill="none">
    <circle cx="6.5" cy="6.5" r="5.5" fill="#fff" stroke="#000" strokeWidth="1.5" />
    <path d="M10.5 10.5l6 6" stroke="#000" strokeWidth="2.4" />
    <path d={plus ? 'M3.5 6.5h6M6.5 3.5v6' : 'M3.5 6.5h6'} stroke="#1050d8" strokeWidth="2.2" />
  </svg>
);
const RowsIcon = () => (
  <svg width="19" height="15" viewBox="0 0 19 15">
    <rect x="0.5" y="0.5" width="18" height="5" fill="#fff" stroke="#666" />
    <path d="M3 3h2M6.5 3h2M10 3h2M13.5 3h2" stroke="#333" strokeWidth="2" />
    <path d="M8 7h3v3h2.5l-4 4-4-4H8z" fill="#1c6cd8" />
  </svg>
);
const ArrowMark = styled.svg`
  position: absolute;
  left: 855px;
  top: 576px;
  z-index: 5;
`;

const Stage = styled.div`
  flex: none;
  display: flex;
  flex-direction: column;
`;

const TIME_BOLD = [['2026', 23], ['feb', 146], ['mar', 263], ['abr', 392], ['may', 520], ['jun', 644], ['jul', 772]];
const TIME_DAYS = [['13', 64], ['20', 93], ['27', 122], ['10', 181], ['17', 210], ['24', 239], ['10', 298], ['17', 327], ['24', 356], ['07', 415], ['14', 444], ['21', 474], ['12', 561], ['19', 591], ['26', 620], ['09', 679], ['16', 708], ['23', 737], ['07', 795], ['14', 825], ['21', 854], ['28', 884]];

function Selector({ w, children }) {
  return (
    <ToolCell $w={w}>
      {children}
      <ChevronDown size={11} strokeWidth={3} />
    </ToolCell>
  );
}

export default function App() {
  return (
    <Page>
      <GlobalStyle />
      <Toolbar>
        <ToolCell $w={25}><CandleIcon /></ToolCell>
        <ToolCell $w={18}><ChainIcon /></ToolCell>
        <Selector w={42}>NQ</Selector>
        <Selector w={41}>Full</Selector>
        <Selector w={50}>1 día</Selector>
        <Selector w={92}>150 unidades</Selector>
        <ToolCell $w={95}><IndicatorIcon />Indicadores</ToolCell>
        <ToolCell $w={15}><ChevronDown size={11} strokeWidth={3} /></ToolCell>
        <Instrument>
          <InfoBox>i</InfoBox>
          <InstrumentName>Mini NASDAQ100 Full0926</InstrumentName>
          <Last>28.105,00</Last>
          <Change>-0,63 %</Change>
          <Clock>20:00:12</Clock>
          <StatusDot />
        </Instrument>
        <ToolCell $w={23}><SyncIcon /></ToolCell>
        <ToolCell $w={56} $plain $gap={6}>
          <WinMin /><WinMax /><WinClose />
        </ToolCell>
      </Toolbar>

      <Stage>
        <Pane $h={32} $noTop>
          <Plot><VolumePane /></Plot>
          <Axis>
            <AxisValue $y={3}>20</AxisValue>
            <Tag $y={13} $c="#99a2d8" $w={41}>4,3746</Tag>
          </Axis>
        </Pane>
        <Pane $h={36}>
          <Plot><OscillatorPane /></Plot>
          <Axis>
            <AxisValue $y={3}>100</AxisValue>
            <Tag $y={20} $c="#333" $w={40} $h={15} $bg="#f4f4f4">0,0000</Tag>
          </Axis>
        </Pane>
        <Pane $h={434}>
          <Plot>
            <Watermark>
              NQXXXX<br />Mini NASDAQ100 Full0926<br />Fut. - CME E-mini<br />Futuro
            </Watermark>
            <MainPane />
            <Delay>ProRealTime.com - Diferido de 10 min</Delay>
          </Plot>
          <Axis>
            <AxisValue $y={1}>32.000</AxisValue>
            <AxisValue $y={77} $bold>30.000</AxisValue>
            <AxisValue $y={263}>26.000</AxisValue>
            <AxisValue $y={368}>24.000</AxisValue>
            <Tick $y={125} $c="#f08040" />
            <Tick $y={133} $c="#f00000" />
            <Tick $y={168} $c="#000" />
            <Tag $y={111} $c="#f08a5a">29.041,13</Tag>
            <Tag $y={130} $c="#f00000" $h={17}>28.864,88</Tag>
            <Tag $y={150} $c="#000" $bg="linear-gradient(#ffdc20, #f0b000)">28.105,00</Tag>
            <Tag $y={169} $c="#f00000">28.105,00</Tag>
          </Axis>
        </Pane>
        <Pane $h={68}>
          <Plot><MomentumPane /></Plot>
          <Axis>
            <AxisValue $y={2}>100</AxisValue>
            <Tag $y={22} $c="#3048d8" $w={42} $h={14}>-8,0671</Tag>
            <Tag $y={31} $c="#f00000" $w={41} $h={14} $bg="#fff">-13,368</Tag>
            <Tag $y={44} $c="#111" $w={44} $h={19}>-49,765</Tag>
          </Axis>
        </Pane>
        <Pane $h={60}>
          <Plot><FlowPane /></Plot>
          <Axis>
            <AxisValue $y={9}>0,5</AxisValue>
            <AxisValue $y={30} $bold>0</AxisValue>
            <Tag $y={42} $c="#666" $w={43} $h={15}>-0,4924</Tag>
          </Axis>
        </Pane>
      </Stage>
      <ArrowMark width="46" height="44" viewBox="0 0 46 44">
        <path d="M1 41L27 16" stroke="#e81c1c" strokeWidth="5" fill="none" />
        <path d="M42 1L21 8l14 15z" fill="#e81c1c" />
      </ArrowMark>

      <Legend>
        <LegendRow>
          <LegendCell $w={19} $plain><WindowsIcon /></LegendCell>
          <LegendCell $w={89} $pad={2}>FM<LegendValue $ml={3} $c="#22aa22">-1</LegendValue><LegendValue $ml={2} $c="#22cc22">0</LegendValue><LegendValue $ml={5} $c="#22aa22">-1</LegendValue><LegendValue $ml={3} $c="#f00000">-1</LegendValue><LegendValue $ml={4} $c="#f00000">-1</LegendValue></LegendCell>
          <LegendCell $w={59}>FE<LegendValue $ml={4} $c="#f00000">0</LegendValue><LegendValue $ml={7} $c="#44dd22">0</LegendValue><LegendValue $ml={5} $c="#f00000">-1</LegendValue></LegendCell>
          <LegendCell $w={136}>VIGIA<LegendValue $ml={3} $c="#f00000">-29,100</LegendValue><LegendValue $ml={9} $c="#f00000">-10,276</LegendValue></LegendCell>
          <LegendCell $w={103}>CFI5 (52)<LegendValue $ml={4} $c="#f08a5a">-1,8242</LegendValue></LegendCell>
          <LegendCell $w={90}>ATR%<LegendValue $ml={3} $c="#6688ee">3,5288</LegendValue></LegendCell>
          <LegendCell $w={71}>IA<LegendValue $ml={6}>-622,88</LegendValue></LegendCell>
          <LegendCell $w={182}>ECAP% V03<LegendValue $ml={6} $c="#6c9cf0">-8,0671</LegendValue><LegendValue $ml={10} $c="#1818c0">-78,316</LegendValue><LegendValue $ml={15}>0</LegendValue></LegendCell>
        </LegendRow>
      </Legend>

      <TimeAxis>
        {[...WEEK_X, ...MONTH_X].map((x) => <TimeTick key={x} $x={x} />)}
        {TIME_BOLD.map(([t, x]) => <TimeLabel key={t} $x={x} $bold>{t}</TimeLabel>)}
        {TIME_DAYS.map(([t, x]) => <TimeLabel key={t + x} $x={x}>{t}</TimeLabel>)}
      </TimeAxis>

      <BottomBar>
        <BarButton $w={32} $line><PenIcon /></BarButton>
        <BarButton $w={27}><MenuIcon /></BarButton>
        <BarButton $w={14}><ChevronsRight size={12} color="#555" /></BarButton>
        <ScrollTrack>
          <ScrollEnd><ChevronLeft size={11} strokeWidth={3.5} color="#222" /></ScrollEnd>
          <ScrollFill />
          <ScrollFill />
          <ScrollEnd $right><ChevronRight size={11} strokeWidth={3.5} color="#222" /></ScrollEnd>
        </ScrollTrack>
        <IconRow>
          <CalendarBack />
          <UndoIcon />
          <UndoIcon flip />
          <WrenchIcon />
          <GreySearch />
          <ZoomIcon />
          <ZoomIcon plus />
          <RowsIcon />
        </IconRow>
      </BottomBar>
    </Page>
  );
}
